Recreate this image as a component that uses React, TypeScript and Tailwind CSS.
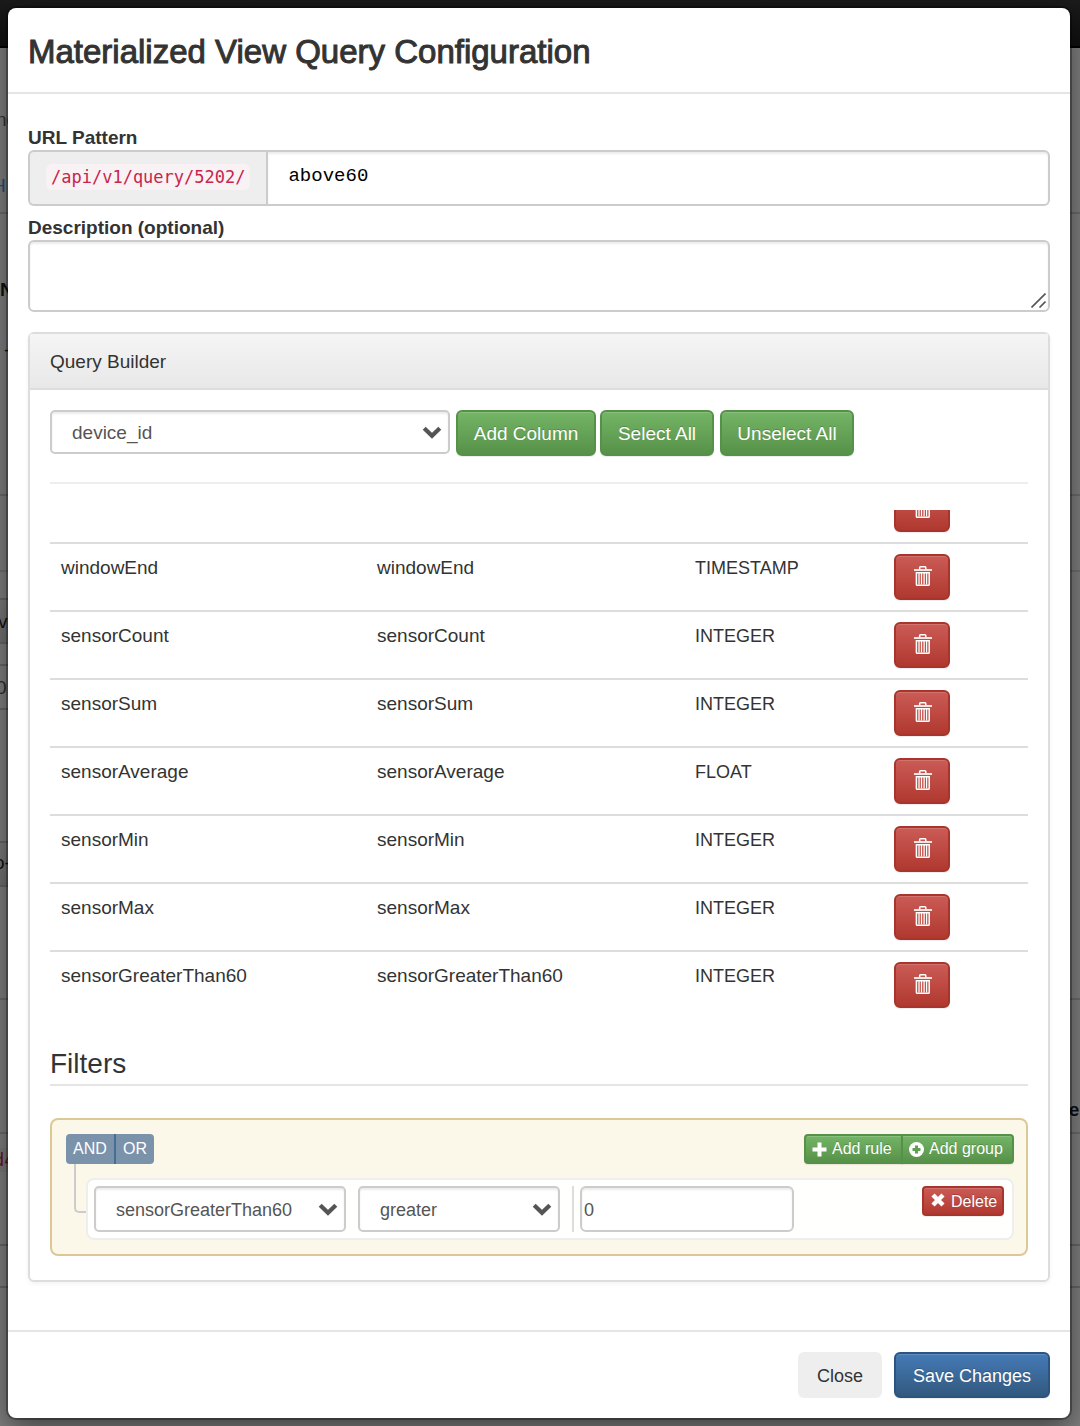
import React from "react";

const SANS = "font-['Liberation_Sans',Arial,sans-serif]";

const GREEN =
  "border-2 border-[#569149] bg-linear-to-b from-[#74b566] to-[#579149] text-white [text-shadow:0_-1px_0_rgba(0,0,0,0.2)] shadow-[inset_0_1px_0_rgba(255,255,255,0.15),0_1px_1px_rgba(0,0,0,0.08)]";
const RED =
  "border-2 border-[#a8352d] bg-linear-to-b from-[#cb5b56] to-[#b0382f] text-white [text-shadow:0_-1px_0_rgba(0,0,0,0.2)] shadow-[inset_0_1px_0_rgba(255,255,255,0.15),0_1px_1px_rgba(0,0,0,0.08)]";
const FIELD =
  "border-2 border-[#cccccc] bg-white shadow-[inset_0_2px_2px_rgba(0,0,0,0.075)] outline-none";

const columns = [
  { name: "", alias: "", type: "" },
  { name: "windowEnd", alias: "windowEnd", type: "TIMESTAMP" },
  { name: "sensorCount", alias: "sensorCount", type: "INTEGER" },
  { name: "sensorSum", alias: "sensorSum", type: "INTEGER" },
  { name: "sensorAverage", alias: "sensorAverage", type: "FLOAT" },
  { name: "sensorMin", alias: "sensorMin", type: "INTEGER" },
  { name: "sensorMax", alias: "sensorMax", type: "INTEGER" },
  { name: "sensorGreaterThan60", alias: "sensorGreaterThan60", type: "INTEGER" },
];

function TrashIcon() {
  return (
    <svg width="18" height="20" viewBox="0 0 18 20" fill="none" stroke="white" aria-hidden="true">
      <path d="M5.7 3.5V1.6Q5.7 0.8 6.5 0.8H11Q11.8 0.8 11.8 1.6V3.5" strokeWidth="1.5" />
      <path d="M0 4H18" strokeWidth="1.7" />
      <path d="M2.4 6.7H15.2V18.4Q15.2 19.2 14.4 19.2H3.2Q2.4 19.2 2.4 18.4Z" strokeWidth="1.5" />
      <path d="M5 7V18.5M7.5 7V18.5M10.1 7V18.5M12.6 7V18.5" strokeWidth="1.3" />
    </svg>
  );
}

function Chevron() {
  return (
    <svg
      className="pointer-events-none absolute top-1/2 right-2 -mt-1.5"
      width="20"
      height="13"
      viewBox="0 0 20 13"
      aria-hidden="true"
    >
      <path d="M2.2 2.2L10 9.8L17.8 2.2" fill="none" stroke="#555555" strokeWidth="4.2" />
    </svg>
  );
}

function SelectBox({ id, label, value, box, text }: { id: string; label: string; value: string; box: string; text: string }) {
  return (
    <div className={`relative ${box}`}>
      <select
        id={id}
        aria-label={label}
        className={`h-full w-full appearance-none rounded-[5px] pt-0.5 pr-8 pl-5 text-[#555555] ${text} ${FIELD}`}
      >
        <option>{value}</option>
      </select>
      <Chevron />
    </div>
  );
}

function PageBehind() {
  return (
    <div className="absolute inset-0 overflow-hidden bg-[#7f7f7f] text-[19px] leading-6" aria-hidden="true">
      <div className="h-12 border-b-2 border-black bg-linear-to-b from-[#1b1b1b] to-[#101010]" />
      <div className="h-[166px] border-b-2 border-[#6b6b6b] pt-[60px]">
        <div className="-ml-1 text-[#333333]">ne</div>
        <div className="mt-[42px] -ml-2 text-[#24507a]">H</div>
      </div>
      <div className="h-[282px] border-b-2 border-[#6b6b6b] pt-16">
        <div className="font-bold text-[#111111]">N</div>
        <div className="mt-9 ml-1 text-[#111111]">-</div>
      </div>
      <div className="h-[76px] border-b-2 border-[#6f6f6f]" />
      <div className="h-[428px] border-b-2 border-[#6b6b6b] pt-[26px]">
        <div className="h-[46px] w-1/2 border-y-2 border-[#666666] bg-linear-to-b from-[#7b7b7b] to-[#707070] pt-2.5 text-[#111111]">
          <div className="-ml-0.5">vi</div>
        </div>
        <div className="mt-5 h-[46px] w-1/2 border-y-2 border-[#666666] pt-2.5 text-[#2a2a2a]">
          <div className="-ml-1">0</div>
        </div>
        <div className="mt-[131px] h-[46px] w-1/2 border-y-2 border-[#666666] bg-linear-to-b from-[#7b7b7b] to-[#707070] pt-2 text-[#111111]">
          <div className="-ml-1.5">o-</div>
        </div>
      </div>
      <div className="h-[134px] border-b-2 border-[#6b6b6b] pt-[98px]">
        <div className="-mr-2.5 text-right font-bold text-[#111111]">es</div>
      </div>
      <div className="h-28 border-b-2 border-[#666666] pt-3.5">
        <div className="-ml-1.5 w-10 rounded bg-[#7b7878] font-['DejaVu_Sans_Mono',monospace] text-[17px] text-[#631328]">d4</div>
      </div>
      <div className="h-[42px] border-b-2 border-[#666666]" />
    </div>
  );
}

export default function App() {
  return (
    <div className={`relative min-h-screen overflow-hidden text-[#333333] ${SANS}`}>
      <PageBehind />
      <div
        role="dialog"
        aria-labelledby="dialog-title"
        className="relative my-2 mr-2.5 ml-2 rounded-[8px] bg-white shadow-[0_0_0_2px_rgba(0,0,0,0.3),0_10px_30px_rgba(0,0,0,0.5)]"
      >
        <header className="border-b-2 border-[#e5e5e5] px-5 pt-[22px] pb-[18px]">
          <h1 id="dialog-title" className="text-[33px] leading-[44px] [-webkit-text-stroke:1px_#333333]">
            Materialized View Query Configuration
          </h1>
        </header>

        <main className="px-5 pt-8 pb-12">
          <label htmlFor="url" className="block text-[19px] leading-6 font-bold">
            URL Pattern
          </label>
          <div className="flex h-14">
            <div className="flex items-start rounded-l-[6px] border-2 border-r-0 border-[#cccccc] bg-[#eeeeee] px-4 pt-3">
              <code className="rounded-[6px] bg-[#f9f2f4] px-[5px] font-['DejaVu_Sans_Mono',monospace] text-[17px] leading-[26px] text-[#c7254e]">
                /api/v1/query/5202/
              </code>
            </div>
            <input
              id="url"
              defaultValue="above60"
              className={`min-w-0 flex-1 rounded-r-[6px] px-5 pb-1 font-['Liberation_Mono',monospace] text-[19px] text-black ${FIELD}`}
            />
          </div>

          <label htmlFor="description" className="mt-2.5 block text-[19px] leading-6 font-bold">
            Description (optional)
          </label>
          <div className="relative h-[72px]">
            <textarea id="description" className={`block h-full w-full resize-none rounded-[6px] px-5 py-2 text-[19px] ${FIELD}`} />
            <svg className="pointer-events-none absolute right-1 bottom-1" width="15" height="15" viewBox="0 0 15 15" aria-hidden="true">
              <path d="M0.5 14.5L14.5 0.5M8.5 14.5L14.5 8.5" stroke="#555555" strokeWidth="1.6" fill="none" />
            </svg>
          </div>

          <section className="mt-5 rounded-[6px] border-2 border-[#dddddd] shadow-[0_2px_4px_rgba(0,0,0,0.05)]">
            <h2 className="border-b-2 border-[#dddddd] bg-linear-to-b from-[#f5f5f5] to-[#e8e8e8] px-5 pt-4 pb-3.5 text-[19px] leading-6">
              Query Builder
            </h2>
            <div className="px-5 pt-5 pb-6">
              <div className="flex items-start">
                <SelectBox id="column" label="Column" value="device_id" box="h-11 w-[400px]" text="text-[19px]" />
                <button className={`ml-1.5 h-[46px] w-[140px] rounded-[6px] pt-0.5 text-[19px] ${GREEN}`}>Add Column</button>
                <button className={`ml-1 h-[46px] w-[114px] rounded-[6px] pt-0.5 text-[19px] ${GREEN}`}>Select All</button>
                <button className={`ml-1.5 h-[46px] w-[134px] rounded-[6px] pt-0.5 text-[19px] ${GREEN}`}>Unselect All</button>
              </div>
              <hr className="my-[26px] border-t-2 border-[#eeeeee]" />

              <div className="flex h-[508px] flex-col justify-end overflow-hidden">
                <table className="w-full table-fixed border-separate border-spacing-0 text-left text-[19px] leading-6">
                  <colgroup>
                    <col className="w-[316px]" />
                    <col className="w-[318px]" />
                    <col className="w-[200px]" />
                    <col />
                  </colgroup>
                  <tbody>
                    {columns.map((c, i) => (
                      <tr key={i} className="h-[68px] align-top">
                        <td className="border-t-2 border-[#dddddd] px-[11px] pt-3">{c.name}</td>
                        <td className="border-t-2 border-[#dddddd] px-[11px] pt-3">{c.alias}</td>
                        <td className="border-t-2 border-[#dddddd] px-[11px] pt-3 text-[18px]">{c.type}</td>
                        <td className="border-t-2 border-[#dddddd] px-2.5 pt-2.5">
                          <button
                            aria-label="Remove column"
                            className={`flex h-[46px] w-14 items-start rounded-[6px] pt-2.5 pl-[18px] ${RED}`}
                          >
                            <TrashIcon />
                          </button>
                        </td>
                      </tr>
                    ))}
                  </tbody>
                </table>
              </div>

              <h3 className="mt-7 border-b-2 border-[#e5e5e5] pb-0.5 text-[28px] leading-9">Filters</h3>

              <div className="mt-8 rounded-[8px] border-2 border-[#dcc896] bg-[#fcf8e9] py-3.5 pr-3 pl-3.5">
                <div className="flex h-[30px] justify-between text-[16px]">
                  <div className="flex text-white">
                    <button className="w-12 rounded-l-[4px] bg-[#7b92ab]">AND</button>
                    <button className="w-10 rounded-r-[4px] border-l-2 border-[#456d95] bg-[#7b92ab]">OR</button>
                  </div>
                  <div className="flex">
                    <button className={`flex w-[99px] items-center rounded-l-[4px] pl-1.5 whitespace-nowrap ${GREEN}`}>
                      <svg width="15" height="15" viewBox="0 0 15 15" className="mr-[5px] shrink-0" aria-hidden="true">
                        <path d="M5.5 0.5h4v5h5v4h-5v5h-4v-5h-5v-4h5z" fill="white" />
                      </svg>
                      Add rule
                    </button>
                    <button className={`-ml-0.5 flex w-[113px] items-center rounded-r-[4px] pl-1.5 whitespace-nowrap ${GREEN}`}>
                      <svg width="15" height="15" viewBox="0 0 15 15" className="mr-[5px] shrink-0" aria-hidden="true">
                        <circle cx="7.5" cy="7.5" r="7.5" fill="white" />
                        <path d="M6 3.5h3v2.5h2.5v3h-2.5v2.5h-3v-2.5h-2.5v-3h2.5z" fill="#60a052" />
                      </svg>
                      Add group
                    </button>
                  </div>
                </div>

                <div className="relative mt-3.5 ml-5 flex items-start rounded-[8px] border-2 border-[#eeeeee] bg-[#fffffd] p-1.5">
                  <span className="absolute -top-4 -left-3.5 h-[49px] w-3 rounded-bl-[5px] border-b-2 border-l-2 border-[#cccccc]" />
                  <SelectBox id="field" label="Field" value="sensorGreaterThan60" box="h-[46px] w-[252px]" text="text-[18px]" />
                  <SelectBox id="operator" label="Operator" value="greater" box="ml-3 h-[46px] w-[202px]" text="text-[18px]" />
                  <div className="ml-3 border-l-2 border-[#dddddd] pl-1.5">
                    <input
                      aria-label="Value"
                      defaultValue="0"
                      className={`block h-[46px] w-[214px] rounded-[6px] px-0.5 pt-0.5 text-[18px] text-[#555555] ${FIELD}`}
                    />
                  </div>
                  <button className={`mr-0.5 ml-auto flex h-[30px] w-[82px] items-center rounded-[4px] pt-0.5 pl-[7px] text-[16px] ${RED}`}>
                    <svg width="14" height="14" viewBox="0 0 14 14" className="mr-1.5 mb-1 shrink-0" aria-hidden="true">
                      <path d="M2 2L12 12M12 2L2 12" stroke="white" strokeWidth="4.4" />
                    </svg>
                    Delete
                  </button>
                </div>
              </div>
            </div>
          </section>
        </main>

        <footer className="flex justify-end gap-3 border-t-2 border-[#e5e5e5] p-5 text-[18px]">
          <button className="h-[46px] w-[84px] rounded-[6px] bg-[#eeeeee] pt-0.5 text-[#333333]">Close</button>
          <button className="h-[46px] w-[156px] rounded-[6px] border-2 border-[#2b5580] bg-linear-to-b from-[#457ab6] to-[#32597f] pt-0.5 text-white shadow-[inset_0_1px_0_rgba(255,255,255,0.15),0_1px_1px_rgba(0,0,0,0.08)] [text-shadow:0_-1px_0_rgba(0,0,0,0.2)]">
            Save Changes
          </button>
        </footer>
      </div>
    </div>
  );
}
